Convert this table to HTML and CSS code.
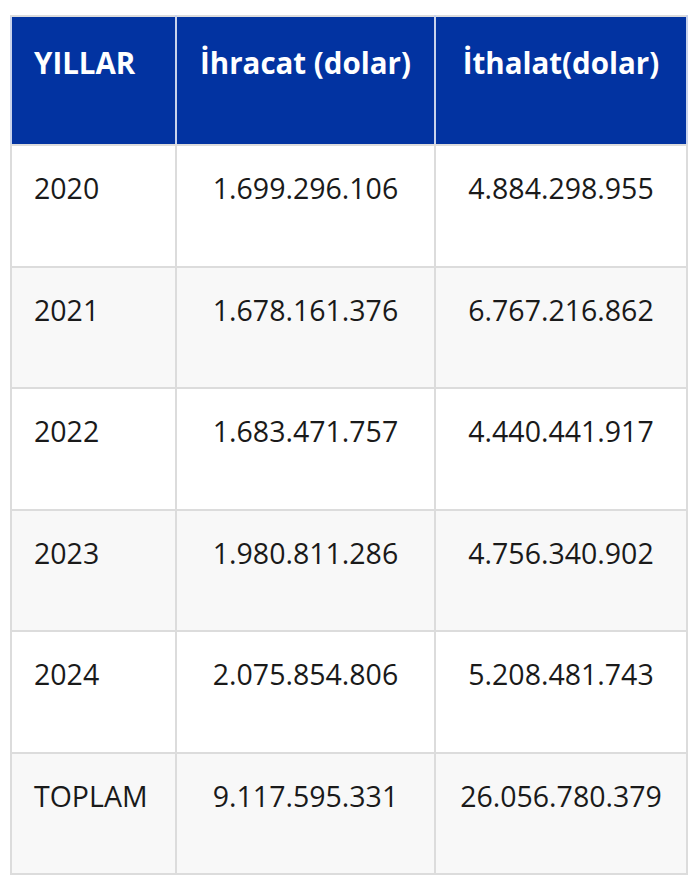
FILE: index.html
```html
<!DOCTYPE html>
<html lang="tr">
<head>
<meta charset="utf-8">
<title>Yıllar</title>
<link rel="stylesheet" href="styles.css">
</head>
<body>
<table class="trade">
  <colgroup>
    <col class="c1">
    <col class="c2">
    <col class="c3">
  </colgroup>
  <thead>
    <tr>
      <th class="first">YILLAR</th>
      <th>İhracat (dolar)</th>
      <th>İthalat(dolar)</th>
    </tr>
  </thead>
  <tbody>
    <tr class="tall"><td class="first">2020</td><td>1.699.296.106</td><td>4.884.298.955</td></tr>
    <tr><td class="first">2021</td><td>1.678.161.376</td><td>6.767.216.862</td></tr>
    <tr class="tall"><td class="first">2022</td><td>1.683.471.757</td><td>4.440.441.917</td></tr>
    <tr><td class="first">2023</td><td>1.980.811.286</td><td>4.756.340.902</td></tr>
    <tr class="tall"><td class="first">2024</td><td>2.075.854.806</td><td>5.208.481.743</td></tr>
    <tr><td class="first">TOPLAM</td><td>9.117.595.331</td><td>26.056.780.379</td></tr>
  </tbody>
</table>
</body>
</html>
```
FILE: styles.css
```css
html, body {
  margin: 0;
  padding: 0;
  background: #ffffff;
}
body {
  padding: 15px 14px 0 10px;
  font-family: "Open Sans", "Noto Sans", sans-serif;
}
.trade {
  border-collapse: collapse;
  width: 676px;
  table-layout: fixed;
  border: 2px solid #dcdcdc;
  font-size: 28.5px;
  line-height: 39px;
  color: #1a1a1a;
}
.c1 { width: 165px; }
.c2 { width: 259px; }
.c3 { width: 252px; }
.trade th,
.trade td {
  border: 2px solid #dcdcdc;
  padding: 23px 8px 0;
  text-align: center;
  vertical-align: top;
}
.trade th {
  background: #0233a1;
  color: #ffffff;
  font-weight: 700;
  font-size: 29.5px;
  padding-top: 26px;
  height: 101px;
  border-color: #c9d3ec;
  border-top-color: #dcdcdc;
  border-bottom-color: #dcdcdc;
}
.trade td {
  height: 96px;
}
.trade tr.tall td {
  height: 97px;
}
.trade .first {
  text-align: left;
  padding-left: 22px;
}
.trade tbody tr:nth-child(odd) td {
  background: #ffffff;
}
.trade tbody tr:nth-child(even) td {
  background: #f8f8f8;
}
```
